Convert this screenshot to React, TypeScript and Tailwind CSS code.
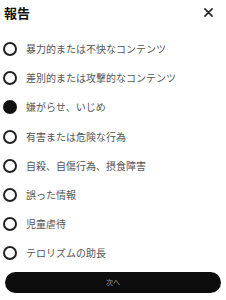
import { useState } from "react";

const reasons = [
  "暴力的または不快なコンテンツ",
  "差別的または攻撃的なコンテンツ",
  "嫌がらせ、いじめ",
  "有害または危険な行為",
  "自殺、自傷行為、摂食障害",
  "誤った情報",
  "児童虐待",
  "テロリズムの助長",
];

export default function App() {
  const [selected, setSelected] = useState(2);

  return (
    <div
      className="flex h-[300px] w-[226px] flex-col bg-white"
      style={{ fontFamily: '"Noto Sans CJK JP", "Noto Sans", sans-serif' }}
    >
      <div className="flex h-[24px] items-center justify-between pl-[4px] pr-[13px]">
        <h1 className="text-[13px] font-bold leading-none text-[#111]">報告</h1>
        <button className="flex h-[10px] w-[10px] items-center justify-center">
          <svg viewBox="0 0 10 10" className="h-[9px] w-[9px]">
            <path
              d="M1 1 L9 9 M9 1 L1 9"
              stroke="#222"
              strokeWidth="1.7"
              strokeLinecap="round"
              fill="none"
            />
          </svg>
        </button>
      </div>

      <ul className="mt-[10.5px] flex flex-col">
        {reasons.map((label, i) => (
          <li key={label}>
            <button
              onClick={() => setSelected(i)}
              className="flex h-[29.2px] w-full items-center gap-[9px] pl-[3px] text-left"
            >
              <span
                className={
                  i === selected
                    ? "h-[14px] w-[14px] shrink-0 rounded-full bg-[#111]"
                    : "h-[14px] w-[14px] shrink-0 rounded-full border-2 border-[#222]"
                }
              />
              <span className="text-[10px] leading-none text-[#555]">{label}</span>
            </button>
          </li>
        ))}
      </ul>

      <button className="mx-[5px] mt-[4px] flex h-[21px] items-center justify-center rounded-full bg-[#0d0d0d]">
        <span className="text-[7px] leading-none text-[#a0a0a0]">次へ</span>
      </button>
    </div>
  );
}
